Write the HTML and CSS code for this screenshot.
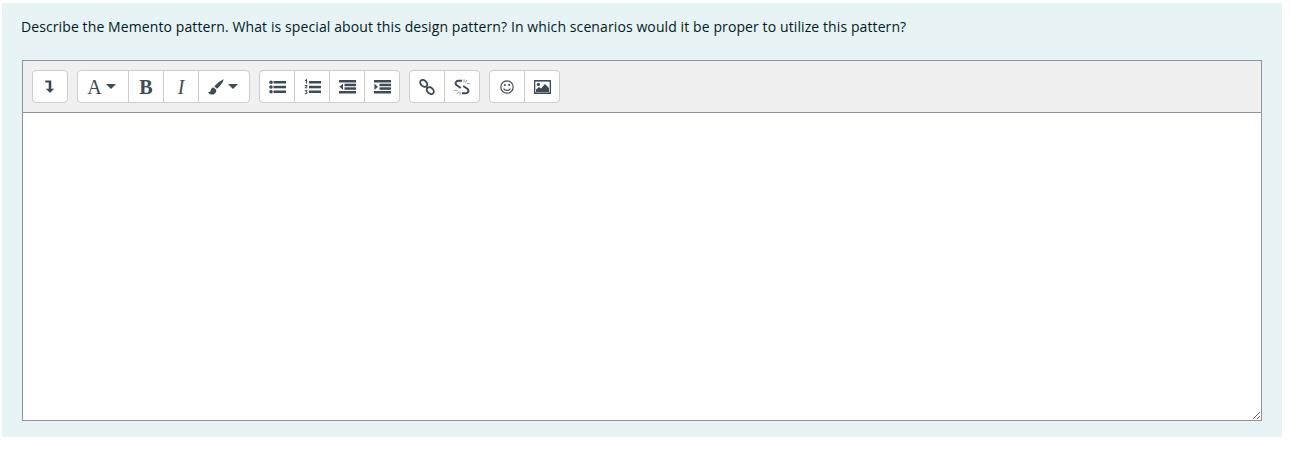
FILE: index.html
```html
<!DOCTYPE html>
<html lang="en">
<head>
    <meta charset="UTF-8">
    <title>Question</title>
    <link rel="stylesheet" href="styles.css">
</head>
<body>
    <div class="question">
        <p class="prompt">Describe the Memento pattern. What is special about this design pattern? In which scenarios would it be proper to utilize this pattern?</p>
        <div class="editor">
            <div class="toolbar">
                <div class="group">
                    <button class="btn" title="Toggle">
                        <svg width="10" height="14" viewBox="0 0 10 14"><path d="M.3 .6H6.3V8.8H9.2L5 13 .8 8.8H3.7V2.6H.3Z" fill="#3f4a57"/></svg>
                    </button>
                </div>
                <div class="group">
                    <button class="btn wide" title="Font"><span class="serif letter">A</span><span class="caret"></span></button>
                    <button class="btn" title="Bold"><span class="serif letter bold">B</span></button>
                    <button class="btn" title="Italic"><span class="serif letter italic">I</span></button>
                    <button class="btn wide" title="Colour">
                        <svg width="16" height="16" viewBox="0 0 16 16"><path d="M15.8 .2C13 1.2 8.6 4.4 6.4 7.6L9 9.8C12 7.4 15 3.4 15.8 .2Z M5.6 8.6C3.6 8.8 3 10.2 2.6 11.8 2.4 12.8 1.2 13.2 .2 13.2 1.2 15.2 3.4 16 5.4 15.4 7.6 14.6 8.6 12.8 8.2 10.8Z" fill="#3f4a57"/></svg>
                        <span class="caret"></span>
                    </button>
                </div>
                <div class="group">
                    <button class="btn" title="Bullet list">
                        <svg width="17" height="14" viewBox="0 0 17 14" fill="#3f4a57"><circle cx="2" cy="2.2" r="1.8"/><circle cx="2" cy="7" r="1.8"/><circle cx="2" cy="11.8" r="1.8"/><rect x="4.5" y="1" width="12.5" height="2.5"/><rect x="4.5" y="5.8" width="12.5" height="2.5"/><rect x="4.5" y="10.5" width="12.5" height="2.5"/></svg>
                    </button>
                    <button class="btn" title="Numbered list">
                        <svg width="17" height="16" viewBox="0 0 17 16" fill="#3f4a57"><path d="M1 1.2 2.2.3H3V4.6H2V1.8L1 2.2Z M.8 6H3.4V6.9L2 8.4H3.5V9.3H.7V8.5L2.3 6.9H.8Z M.8 11H3.4V11.8L2.5 12.6C3.2 12.7 3.5 13.1 3.5 13.8 3.5 15 2.2 15.5.8 15V14.2C1.6 14.5 2.5 14.4 2.5 13.8 2.5 13.4 2 13.2 1.5 13.2V12.6L2.2 11.8H.8Z"/><rect x="5" y="2" width="12" height="2.5"/><rect x="5" y="6.8" width="12" height="2.5"/><rect x="5" y="11.5" width="12" height="2.5"/></svg>
                    </button>
                    <button class="btn" title="Outdent">
                        <svg width="17" height="14" viewBox="0 0 17 14" fill="#3f4a57"><rect x="0" y="0" width="17" height="2.5"/><rect x="5.5" y="3.7" width="11.5" height="2.5"/><rect x="5.5" y="7.3" width="11.5" height="2.5"/><rect x="0" y="11" width="17" height="2.5"/><path d="M4 3.7V9.8L.4 6.8Z"/></svg>
                    </button>
                    <button class="btn" title="Indent">
                        <svg width="17" height="14" viewBox="0 0 17 14" fill="#3f4a57"><rect x="0" y="0" width="17" height="2.5"/><rect x="5.5" y="3.7" width="11.5" height="2.5"/><rect x="5.5" y="7.3" width="11.5" height="2.5"/><rect x="0" y="11" width="17" height="2.5"/><path d="M.4 3.7V9.8L4 6.8Z"/></svg>
                    </button>
                </div>
                <div class="group">
                    <button class="btn" title="Link">
                        <svg width="16" height="16" viewBox="0 0 16 16" fill="none" stroke="#3f4a57" stroke-width="1.9"><ellipse cx="4.7" cy="4.4" rx="4" ry="2.9" transform="rotate(45 4.7 4.4)"/><ellipse cx="11.3" cy="11.6" rx="4" ry="2.9" transform="rotate(45 11.3 11.6)"/></svg>
                    </button>
                    <button class="btn" title="Unlink">
                        <svg width="16" height="16" viewBox="0 0 16 16" fill="none" stroke="#3f4a57" stroke-width="2"><path d="M8 1.8H4.5C1.8 1.8.8 4.4 2.4 6L6.8 9"/><path d="M9.2 7 13.6 10C15.2 11.6 14.2 14.3 11.6 14.3H8"/><path d="M10 .2V3.4M13 1 11.2 3.6M15.6 4.6H12.6M.4 11.4H3.4M3 15 4.8 12.4M6 15.8V12.6" stroke="#9a9ea3" stroke-width="1"/></svg>
                    </button>
                </div>
                <div class="group">
                    <button class="btn" title="Emoticon">
                        <svg width="14" height="14" viewBox="0 0 14 14" fill="none" stroke="#3f4a57" stroke-width="1.2"><circle cx="7" cy="7" r="6.2"/><path d="M3.6 8.4C4.8 10.9 9.2 10.9 10.4 8.4"/><circle cx="4.9" cy="5" r="1" fill="#3f4a57" stroke="none"/><circle cx="9.1" cy="5" r="1" fill="#3f4a57" stroke="none"/></svg>
                    </button>
                    <button class="btn" title="Image">
                        <svg width="17" height="14" viewBox="0 0 17 14"><path d="M0 0H17V14H0Z" fill="#3f4a57"/><path d="M1.3 1.6H15.7V12.4H1.3Z" fill="#fff"/><path d="M2 12V9.6L5 7 7 8.6 11 4 15 8V12Z" fill="#3f4a57"/><circle cx="4.4" cy="4.4" r="1.6" fill="#3f4a57"/></svg>
                    </button>
                </div>
            </div>
            <textarea class="answer"></textarea>
        </div>
    </div>
</body>
</html>
```

FILE: styles.css
```css
body {
    margin: 0;
    padding: 3px 11px 13px 2px;
    background-color: #fff;
    font-family: "Open Sans", "Liberation Sans", sans-serif;
    font-size: 14px;
}
.question {
    background-color: #e7f3f5;
    padding: 14px 20px 16px 20px;
    height: 404px;
}
.prompt {
    margin: 0 0 23px -1px;
    color: #001a1e;
    line-height: 20px;
    font-size: 14px;
    letter-spacing: 0.1px;
}
.editor {
    border: 1px solid #8f959e;
    display: flex;
    flex-direction: column;
    height: 359px;
}
.toolbar {
    display: flex;
    gap: 9px;
    padding: 9px 9px;
    height: 33px;
    background-color: #f0f0f0;
    border-bottom: 1px solid #8f959e;
}
.group {
    display: flex;
    background-color: #fff;
    border: 1px solid #ccc;
    border-radius: 4px;
}
.btn {
    display: flex;
    align-items: center;
    justify-content: center;
    gap: 4px;
    width: 35px;
    padding: 0;
    background: none;
    border: none;
    border-left: 1px solid #ccc;
}
.btn:first-child {
    border-left: none;
    width: 34px;
}
.btn.wide {
    width: 51px;
    padding-right: 3px;
}
.btn.wide:first-child {
    width: 50px;
}
.serif {
    font-family: "Liberation Serif", serif;
}
.letter {
    font-size: 20px;
    color: #3f4a57;
    line-height: 1;
}
.bold {
    font-weight: bold;
}
.italic {
    font-style: italic;
}
.caret {
    width: 0;
    height: 0;
    border-left: 5px solid transparent;
    border-right: 5px solid transparent;
    border-top: 5px solid #3f4a57;
}
.answer {
    flex: 1;
    display: block;
    width: 100%;
    margin: 0;
    padding: 0;
    border: none;
    outline: none;
    resize: vertical;
    box-sizing: border-box;
}
```
